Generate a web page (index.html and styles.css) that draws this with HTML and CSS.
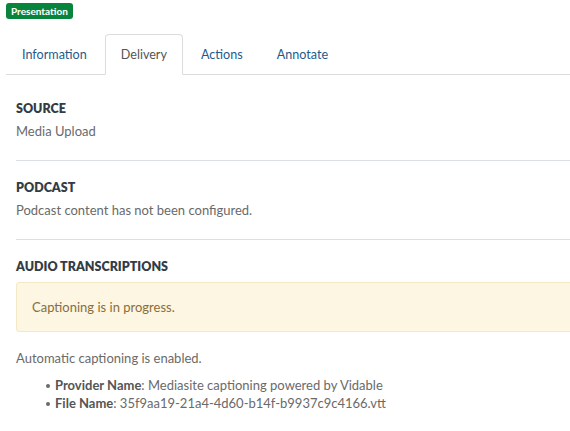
FILE: index.html
```html
<!DOCTYPE html>
<html>
<head>
<meta charset="utf-8">
<link rel="stylesheet" href="styles.css">
</head>
<body>
<div class="page">
  <span class="badge">Presentation</span>
  <ul class="tabs">
    <li class="tab">Information</li>
    <li class="tab active">Delivery</li>
    <li class="tab">Actions</li>
    <li class="tab">Annotate</li>
  </ul>
  <div class="content">
    <section class="section first">
      <h3 class="heading">SOURCE</h3>
      <p class="text">Media Upload</p>
    </section>
    <section class="section">
      <h3 class="heading">PODCAST</h3>
      <p class="text">Podcast content has not been configured.</p>
    </section>
    <section class="section last">
      <h3 class="heading">AUDIO TRANSCRIPTIONS</h3>
      <div class="alert">Captioning is in progress.</div>
      <p class="text">Automatic captioning is enabled.</p>
      <ul class="details">
        <li><strong>Provider Name</strong>: Mediasite captioning powered by Vidable</li>
        <li><strong>File Name</strong>: 35f9aa19-21a4-4d60-b14f-b9937c9c4166.vtt</li>
      </ul>
    </section>
  </div>
</div>
</body>
</html>
```

FILE: styles.css
```css
html, body {
  margin: 0;
  padding: 0;
  background: #fff;
}
body {
  font-family: Lato, "Open Sans", sans-serif;
  color: #6a6a6a;
  font-size: 13px;
}
.page {
  width: 570px;
  height: 431px;
  overflow: hidden;
  padding-top: 3px;
  box-sizing: border-box;
}
.badge {
  display: block;
  width: fit-content;
  margin-left: 6px;
  height: 16px;
  line-height: 16px;
  padding: 0 5px;
  background: #08843c;
  color: #fff;
  font-size: 10px;
  font-weight: 700;
  border-radius: 3px;
}
.tabs {
  list-style: none;
  margin: 15px 0 0 6px;
  padding: 0;
  display: flex;
  border-bottom: 1px solid #dcdcdc;
}
.tab {
  height: 39px;
  line-height: 40px;
  padding: 0 15px;
  margin-right: 2px;
  margin-bottom: -1px;
  color: #1f5a8c;
  font-size: 12.6px;
  border: 1px solid transparent;
  border-radius: 4px 4px 0 0;
}
.tab.active {
  color: #555;
  border-color: #dcdcdc;
  border-bottom-color: #fff;
  background: #fff;
}
.content {
  padding-left: 16px;
  margin-right: -30px;
}
.section {
  padding: 18px 0 20px;
  border-bottom: 1px solid #dcdfe3;
}
.section.first {
  padding-top: 25px;
}
.section.last {
  border-bottom: none;
}
.heading {
  margin: 0;
  font-size: 12.5px;
  line-height: 18px;
  font-weight: 800;
  color: #333c45;
}
.text {
  margin: 4px 0 0;
  line-height: 18px;
}
.alert {
  margin-top: 6px;
  height: 48px;
  line-height: 48px;
  padding: 0 15px;
  background: #fcf6e3;
  border: 1px solid #f4e8c6;
  border-radius: 3px;
  color: #8a6d3b;
}
.alert + .text {
  margin-top: 17px;
}
.details {
  list-style: none;
  margin: 9px 0 0;
  padding-left: 30px;
  line-height: 18px;
}
.details li::before {
  content: "";
  display: inline-block;
  width: 4px;
  height: 4px;
  border-radius: 50%;
  background: #6a6a6a;
  margin-right: 5px;
  vertical-align: 2px;
}
.details strong {
  color: #555;
  font-weight: 700;
}
```
